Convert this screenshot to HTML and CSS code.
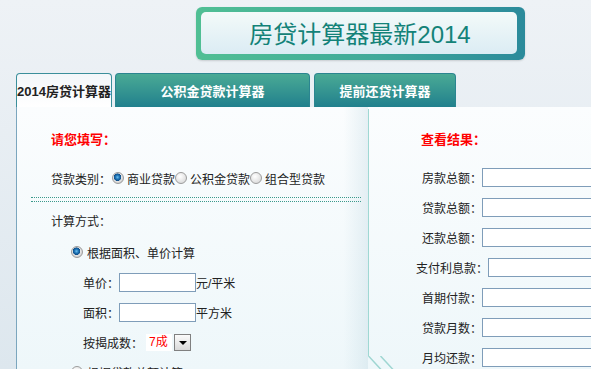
FILE: index.html
```html
<!DOCTYPE html>
<html lang="zh-CN">
<head>
    <meta charset="UTF-8">
    <title>房贷计算器最新2014</title>
    <link rel="stylesheet" href="styles.css">
</head>
<body>
    <div class="header">
        <div class="banner">
            <div class="banner-inner">房贷计算器最新2014</div>
        </div>
    </div>

    <div class="tabs">
        <div class="tab tab-home">2014房贷计算器</div>
        <div class="tab tab-fund">公积金贷款计算器</div>
        <div class="tab tab-prepay">提前还贷计算器</div>
    </div>

    <div class="panel">
        <div class="col-left">
            <div class="section-title">请您填写：</div>
            <div class="type-row">
                <span>贷款类别：</span>
                <span class="radio checked first"></span><span class="opt">商业贷款</span>
                <span class="radio"></span><span class="opt">公积金贷款</span>
                <span class="radio"></span><span class="opt">组合型贷款</span>
            </div>
            <div class="sep"></div>
            <div class="plain-row">计算方式：</div>
            <div class="method-row"><span class="radio checked"></span><span class="opt">根据面积、单价计算</span></div>
            <div class="field-row">
                <span>单价：</span><input class="text-input" type="text"><span>元/平米</span>
            </div>
            <div class="field-row">
                <span>面积：</span><input class="text-input" type="text"><span>平方米</span>
            </div>
            <div class="field-row">
                <span>按揭成数：</span>
                <div class="select">
                    <span class="select-val">7成</span>
                    <span class="select-btn"><span class="caret"></span></span>
                </div>
            </div>
            <div class="method-row next"><span class="radio"></span><span class="opt">根据贷款总额计算</span></div>
        </div>

        <div class="divider"></div>

        <div class="col-right">
            <div class="section-title result-title">查看结果：</div>
            <div class="result-row first"><span>房款总额：</span><input class="result-input" type="text"></div>
            <div class="result-row"><span>贷款总额：</span><input class="result-input" type="text"></div>
            <div class="result-row"><span>还款总额：</span><input class="result-input" type="text"></div>
            <div class="result-row"><span>支付利息款：</span><input class="result-input" type="text"></div>
            <div class="result-row"><span>首期付款：</span><input class="result-input" type="text"></div>
            <div class="result-row"><span>贷款月数：</span><input class="result-input" type="text"></div>
            <div class="result-row"><span>月均还款：</span><input class="result-input" type="text"></div>
        </div>

        <!-- decoration under the divider -->
        <svg class="corner-deco" width="28" height="14" viewBox="0 0 28 14">
            <path d="M0.5 0 L13 13.5 M12.5 0 L25 13.5" stroke="#9fd6d2" stroke-width="1.5" fill="none"/>
        </svg>
    </div>
</body>
</html>
```

FILE: styles.css
```css
html,
body {
    margin: 0;
    overflow: hidden;
}

body {
    width: 591px;
    height: 369px;
    background: linear-gradient(#eef2f6, #dde7ee);
    font-family: "Liberation Sans", "Noto Sans CJK SC", sans-serif;
    font-size: 12px;
    color: #222;
}

/* title banner */
.header {
    height: 73px;
    padding: 7px 0 0 196px;
    box-sizing: border-box;
}

.banner {
    width: 329px;
    height: 53px;
    box-sizing: border-box;
    padding: 5px 8px 6px 5px;
    border-radius: 6px;
    background: linear-gradient(90deg, #50bf94, #3fa99a 55%, #2b8a9b);
    box-shadow: 0 1px 2px rgba(0, 0, 0, 0.15);
}

.banner-inner {
    height: 100%;
    box-sizing: border-box;
    padding: 4px 0 0 2px;
    border-radius: 5px;
    background: linear-gradient(#f3faf9, #dbecf4);
    display: flex;
    align-items: center;
    justify-content: center;
    font-size: 24px;
    line-height: 1;
    color: #138278;
}

/* tabs */
.tabs {
    display: flex;
    gap: 3px;
    height: 34px;
    padding-left: 16px;
}

.tab {
    box-sizing: border-box;
    height: 34px;
    border: 1px solid #2b8590;
    border-bottom: none;
    border-radius: 4px 4px 0 0;
    background: linear-gradient(#4aaa95, #21808d);
    color: #fff;
    font-size: 13px;
    font-weight: bold;
    white-space: nowrap;
    display: flex;
    align-items: center;
    justify-content: center;
}

.tab-home {
    width: 96px;
    background: linear-gradient(#f3f7fa, #fff);
    border-color: #3a8f9b;
    color: #222;
}

.tab-fund {
    width: 195px;
}

.tab-prepay {
    width: 142px;
    margin-left: 1px;
}

/* main panel */
.panel {
    position: relative;
    display: flex;
    height: 262px;
    margin-left: 16px;
    border-left: 1px solid #7ba6be;
    background: linear-gradient(#fbfdfe, #eef7fa);
}

.col-left {
    flex: none;
    width: 351px;
    background: linear-gradient(90deg, transparent 93%, rgba(190, 215, 225, 0.35));
}

.divider {
    flex: none;
    width: 1px;
    height: 247px;
    margin-top: 2px;
    background: #9fd8d3;
}

.col-right {
    flex: none;
    width: 316px;
}

.section-title {
    margin: 25px 0 0 34px;
    line-height: 16px;
    font-size: 13px;
    font-weight: bold;
    color: #f00;
}

.result-title {
    margin-left: 52px;
}

.type-row {
    display: flex;
    align-items: center;
    height: 20px;
    margin: 20px 0 0 34px;
    white-space: nowrap;
}

.opt {
    margin-left: 3px;
}

.method-row .opt {
    margin-left: 4px;
}

.radio {
    display: inline-block;
    flex: none;
    width: 12px;
    height: 12px;
    box-sizing: border-box;
    border: 1px solid #9c9c9c;
    border-radius: 50%;
    background: radial-gradient(circle at 40% 35%, #fff, #d2d2d2);
}

.radio.first {
    margin-left: 1px;
}

.radio.checked {
    background: radial-gradient(circle at 45% 42%, #6cc0ef 0, #1e74b6 2px, #0f4f8a 3.5px, #e6e6e6 4px, #cdcdcd 6px);
}

.sep {
    height: 5px;
    box-sizing: border-box;
    margin: 9px 7px 0 14px;
    border-top: 1px dotted #3c9a8c;
    border-bottom: 1px dotted #3c9a8c;
}

.plain-row {
    height: 20px;
    line-height: 20px;
    margin: 10px 0 0 34px;
}

.method-row {
    display: flex;
    align-items: center;
    height: 20px;
    margin: 10px 0 0 54px;
}

.field-row {
    display: flex;
    align-items: center;
    height: 19px;
    margin: 11px 0 0 66px;
}

.text-input,
.result-input {
    box-sizing: border-box;
    height: 19px;
    margin: 0;
    padding: 0 2px;
    border: 1px solid #7f9db9;
    background: #fff;
    font: inherit;
}

.text-input {
    width: 77px;
}

.select {
    display: flex;
    align-items: center;
    height: 17px;
    margin-left: 3px;
}

.select-val {
    width: 23px;
    height: 17px;
    padding-left: 3px;
    line-height: 17px;
    background: #fff;
    color: #f00;
}

.select-btn {
    display: flex;
    align-items: center;
    justify-content: center;
    width: 17px;
    height: 17px;
    box-sizing: border-box;
    margin-left: 2px;
    border: 1px solid #808080;
    background: linear-gradient(#fbfbfb, #d9d9d9);
}

.caret {
    width: 0;
    height: 0;
    margin-top: 1px;
    border-left: 4px solid transparent;
    border-right: 4px solid transparent;
    border-top: 4px solid #000;
}

.result-row {
    display: flex;
    align-items: center;
    justify-content: center;
    height: 19px;
    margin-top: 11px;
    white-space: nowrap;
}

.result-row.first {
    margin-top: 20px;
}

.result-input {
    width: 150px;
}

.corner-deco {
    position: absolute;
    left: 351px;
    top: 249px;
}
```
